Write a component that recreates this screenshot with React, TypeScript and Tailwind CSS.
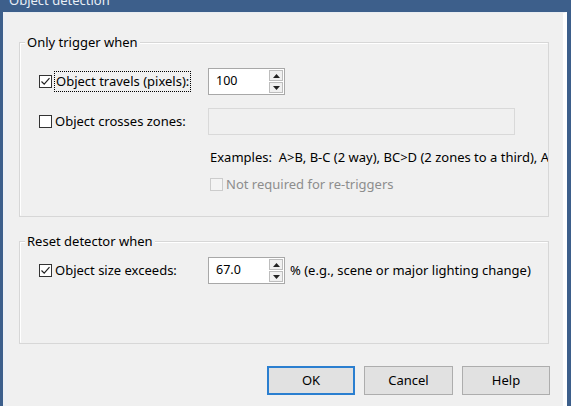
import React from "react";

const font = { fontFamily: '"Noto Sans", "Open Sans", sans-serif' };

function Check({ checked, disabled }: { checked?: boolean; disabled?: boolean }) {
  return (
    <span
      className={
        "flex h-[13px] w-[13px] shrink-0 items-center justify-center border " +
        (disabled ? "border-[#cccccc] bg-[#f4f4f4]" : "border-[#333333] bg-white")
      }
    >
      {checked && (
        <svg width="11" height="11" viewBox="0 0 11 11">
          <path d="M1.5 5.5 L4.2 8.2 L9.5 2.2" fill="none" stroke="#222" strokeWidth="1.2" />
        </svg>
      )}
    </span>
  );
}

function Spin({ value }: { value: string }) {
  return (
    <div className="flex h-[27px] w-[77px] items-stretch border border-[#a8a8a8] bg-white">
      <div className="flex flex-1 items-center pl-[7px] text-[12.5px] text-black">{value}</div>
      <div className="my-[1px] mr-[1px] flex w-[14px] flex-col gap-[1px]">
        <div className="flex flex-1 items-center justify-center border border-[#bdbdbd] bg-[#f0f0f0]">
          <svg width="7" height="4" viewBox="0 0 7 4">
            <path d="M0 4 L3.5 0 L7 4 Z" fill="#222" />
          </svg>
        </div>
        <div className="flex flex-1 items-center justify-center border border-[#bdbdbd] bg-[#f0f0f0]">
          <svg width="7" height="4" viewBox="0 0 7 4">
            <path d="M0 0 L3.5 4 L7 0 Z" fill="#222" />
          </svg>
        </div>
      </div>
    </div>
  );
}

function Group({ title, className, children }: { title: string; className: string; children: React.ReactNode }) {
  return (
    <div className={"relative ml-[12px] w-[530px] overflow-hidden border border-[#d7d7d7] " + className}>
      <div className="pointer-events-none absolute inset-0 border border-t-white border-l-white border-r-transparent border-b-transparent" />
      <span className="absolute left-[5px] top-[-8px] z-10 bg-[#f0f0f0] px-[2px] text-[13px] leading-[15px] text-black">
        {title}
      </span>
      {children}
    </div>
  );
}

export default function App() {
  return (
    <div style={font} className="flex h-[406px] w-[571px] flex-col overflow-hidden bg-[#3d5f8b]">
      <div className="h-[12px] shrink-0 overflow-hidden pl-[9px]">
        <div className="-mt-[8px] text-[13px] leading-[16px] text-[#e8eef5]">Object detection</div>
      </div>
      <div className="flex min-h-0 flex-1 pl-[3px] pr-[4px]">
        <div className="flex flex-1 flex-col border-l-[4px] border-r-[4px] border-t-[1px] border-l-[#eef0f3] border-r-white border-t-[#e8ecf1] bg-[#f0f0f0]">
          <div className="relative mt-[29px] overflow-visible">
            <Group title="Only trigger when" className="h-[175px] overflow-visible pt-[25px]">
              <div className="flex h-[27px] items-center">
                <div className="flex w-[188px] items-center pl-[19px]">
                  <Check checked />
                  <span className="ml-[2px] border border-dotted border-black px-[1px] py-[2px] text-[13px] leading-[15px] text-black">
                    Object travels (pixels):
                  </span>
                </div>
                <Spin value="100" />
              </div>
              <div className="mt-[13px] flex h-[27px] items-center">
                <div className="flex w-[188px] items-center pl-[19px]">
                  <Check />
                  <span className="ml-[3px] text-[13px] leading-[15px] text-black">Object crosses zones:</span>
                </div>
                <div className="h-[27px] w-[307px] border border-[#d9d9d9] bg-[#f0f0f0]" />
              </div>
              <div className="mt-[12px] flex h-[20px] items-center overflow-hidden whitespace-nowrap pl-[190px] text-[13px] leading-[15px] text-black">
                Examples:&nbsp; A&gt;B, B-C (2 way), BC&gt;D (2 zones to a third), A&gt;B&gt;C
              </div>
              <div className="mt-[7px] flex h-[20px] items-center pl-[190px]">
                <Check disabled />
                <span className="ml-[3px] text-[13px] leading-[15px] text-[#8d8d8d]">Not required for re-triggers</span>
              </div>
            </Group>
          </div>
          <div className="mt-[24px]">
            <Group title="Reset detector when" className="h-[103px] overflow-visible pt-[15px]">
              <div className="flex h-[27px] items-center">
                <div className="flex w-[188px] items-center pl-[19px]">
                  <Check checked />
                  <span className="ml-[3px] text-[13px] leading-[15px] text-black">Object size exceeds:</span>
                </div>
                <Spin value="67.0" />
                <span className="ml-[5px] text-[13px] leading-[15px] text-black">% (e.g., scene or major lighting change)</span>
              </div>
            </Group>
          </div>
          <div className="mt-[22px] flex justify-end gap-[9px] pr-[13px]">
            <button className="h-[29px] w-[88px] border-2 border-[#2b7fd0] bg-[#e1e1e1] text-[13px] text-black">OK</button>
            <button className="h-[29px] w-[89px] border border-[#adadad] bg-[#e1e1e1] text-[13px] text-black">Cancel</button>
            <button className="h-[29px] w-[88px] border border-[#adadad] bg-[#e1e1e1] text-[13px] text-black">Help</button>
          </div>
        </div>
      </div>
    </div>
  );
}
